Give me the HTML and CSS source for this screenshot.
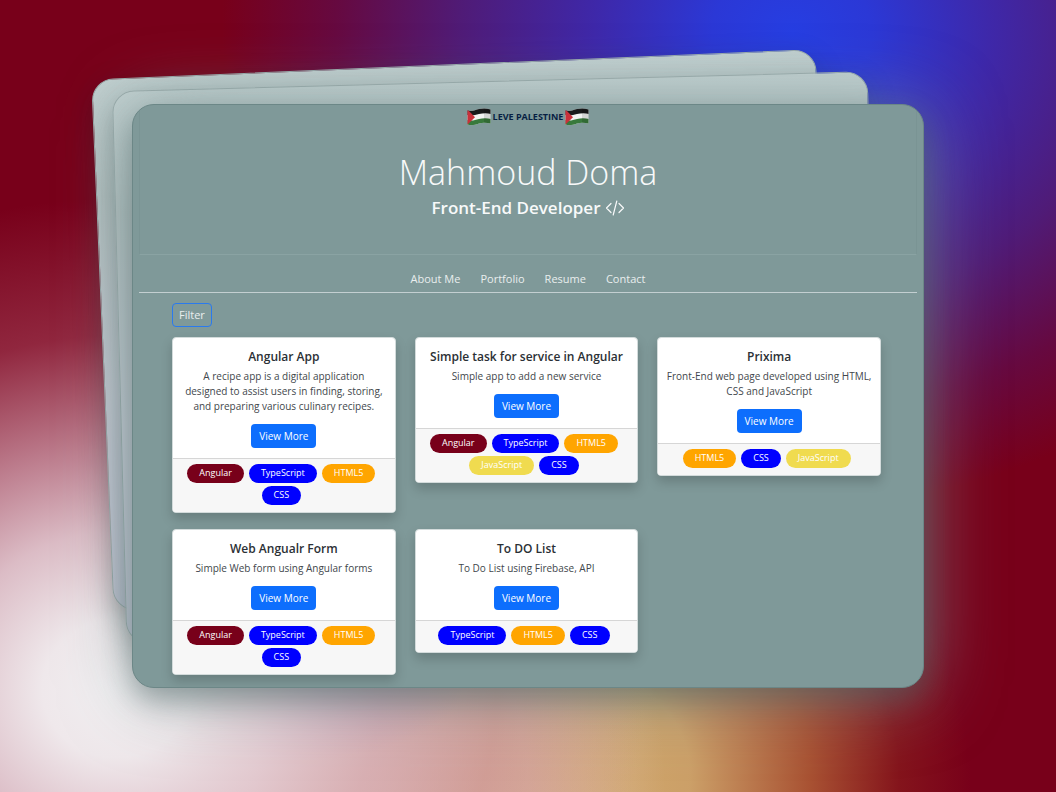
FILE: index.html
```
<!DOCTYPE html>
<html lang="en">
<head>
<meta charset="utf-8">
<meta name="viewport" content="width=device-width, initial-scale=1">
<title>Mahmoud Doma</title>
<link rel="stylesheet" href="styles.css">
</head>
<body>
<svg class="defs" width="0" height="0" aria-hidden="true">
  <symbol id="flag" viewBox="0 0 24 18">
    <clipPath id="wave"><path d="M0.5 2.2C5 4 8 1.8 12 1 16 0 20 0.4 23.5 1.4V15.6C20 14.6 16 14.4 12 15.4 8 16.6 5 18 0.5 16.6Z"/></clipPath>
    <g clip-path="url(#wave)">
      <rect width="24" height="18" fill="#f1f3f2"/>
      <path d="M0 0H24V6C20 4.8 16 5 12 6 8 7 5 8 0 7Z" fill="#18191a"/>
      <path d="M0 12C5 13.4 8 12 12 11 16 10 20 10 24 11V18H0Z" fill="#38793c"/>
      <path d="M0 1L8 9.2 0 17Z" fill="#c9303a"/>
      <path d="M17 0C19 1 22 1 24 1V18C22 16 19 15 17 15Z" fill="#000" opacity=".12"/>
    </g>
  </symbol>
</svg>
<main class="stage">
  <div class="sheet sheet-back"></div>
  <div class="sheet sheet-middle"></div>
  <div class="panel">
    <header class="hero">
      <p class="banner"><svg class="flag"><use href="#flag"/></svg><span class="banner-text">LEVE PALESTINE</span><svg class="flag"><use href="#flag"/></svg></p>
      <h1 class="name">Mahmoud Doma</h1>
      <p class="role">Front-End Developer
        <svg class="code" viewBox="0 0 20 16" fill="none" stroke="currentColor" stroke-width="1.2" stroke-linecap="round" stroke-linejoin="round" aria-hidden="true"><path d="M6 3.5L1.5 8l4.500 4.500M14 3.5l4.500 4.500-4.500 4.500M11.800 1L8.200 15"/></svg>
      </p>
    </header>
    <nav class="nav">
      <a class="nav-link" href="#about">About Me</a>
      <a class="nav-link" href="#portfolio">Portfolio</a>
      <a class="nav-link" href="#resume">Resume</a>
      <a class="nav-link" href="#contact">Contact</a>
    </nav>
    <section class="portfolio" id="portfolio">
      <button class="filter" type="button">Filter</button>
      <div class="cards">
        <article class="card">
          <div class="card-body">
            <h2 class="card-title">Angular App</h2>
            <p class="card-text">A recipe app is a digital application<br>designed to assist users in finding, storing, and preparing various culinary recipes.</p>
            <a class="more" href="#angular-app">View More</a>
          </div>
          <div class="card-footer"><span class="tag angular">Angular</span><span class="tag blue">TypeScript</span><span class="tag html">HTML5</span><span class="tag blue">CSS</span></div>
        </article>
        <article class="card">
          <div class="card-body">
            <h2 class="card-title">Simple task for service in Angular</h2>
            <p class="card-text">Simple app to add a new service</p>
            <a class="more" href="#service-task">View More</a>
          </div>
          <div class="card-footer"><span class="tag angular">Angular</span><span class="tag blue">TypeScript</span><span class="tag html">HTML5</span><span class="tag js">JavaScript</span><span class="tag blue">CSS</span></div>
        </article>
        <article class="card">
          <div class="card-body">
            <h2 class="card-title">Prixima</h2>
            <p class="card-text">Front-End web page developed using HTML, CSS and JavaScript</p>
            <a class="more" href="#prixima">View More</a>
          </div>
          <div class="card-footer"><span class="tag html">HTML5</span><span class="tag blue">CSS</span><span class="tag js">JavaScript</span></div>
        </article>
        <article class="card">
          <div class="card-body">
            <h2 class="card-title">Web Angualr Form</h2>
            <p class="card-text">Simple Web form using Angular forms</p>
            <a class="more" href="#web-form">View More</a>
          </div>
          <div class="card-footer"><span class="tag angular">Angular</span><span class="tag blue">TypeScript</span><span class="tag html">HTML5</span><span class="tag blue">CSS</span></div>
        </article>
        <article class="card">
          <div class="card-body">
            <h2 class="card-title">To DO List</h2>
            <p class="card-text">To Do List using Firebase, API</p>
            <a class="more" href="#todo">View More</a>
          </div>
          <div class="card-footer"><span class="tag blue">TypeScript</span><span class="tag html">HTML5</span><span class="tag blue">CSS</span></div>
        </article>
      </div>
    </section>
  </div>
</main>
</body>
</html>
```
FILE: styles.css
```
* { box-sizing: border-box; }

body {
  margin: 0;
  min-height: 100vh;
  font-family: "Open Sans", "Noto Sans", sans-serif;
  font-size: 10px;
  color: #212529;
  background:
    radial-gradient(ellipse 50% 62% at 11% 87%, #f2f0f2 0, #efe8eb 14%, rgba(228, 204, 212, 0.92) 32%, rgba(215, 172, 185, 0.7) 50%, rgba(190, 110, 130, 0.35) 72%, rgba(120, 0, 26, 0) 100%),
    radial-gradient(ellipse 16% 10% at 28% 86%, rgba(130, 125, 190, 0.8) 0, rgba(130, 125, 190, 0) 100%),
    radial-gradient(ellipse 26% 50% at 37% 100%, #dcbaa8 0, rgba(220, 184, 164, 0.9) 50%, rgba(220, 184, 164, 0) 100%),
    radial-gradient(ellipse 38% 46% at 54% 98%, #d2ab6c 0, rgba(208, 168, 108, 0.95) 30%, rgba(184, 108, 58, 0.75) 60%, rgba(150, 50, 30, 0.4) 82%, rgba(120, 0, 26, 0) 100%),
    radial-gradient(ellipse 54% 60% at 75% 4%, #263ee2 0, #2b38d6 14%, rgba(56, 44, 184, 0.9) 35%, rgba(66, 36, 150, 0.75) 58%, rgba(80, 20, 110, 0.45) 80%, rgba(120, 0, 26, 0) 100%),
    #78001a;
}

.defs { position: absolute; }

.stage {
  position: relative;
  width: 75%;
  margin: 0 auto;
  padding: 104px 0;
}

/* Tilted sheets stacked behind the main panel */
.sheet {
  position: absolute;
  border: 1px solid #9aabab;
  border-radius: 22px;
  background: linear-gradient(180deg, #c0cfcf 0, #b4c1c1 22%, #c6cbd4 60%, #c6c8d8 100%);
  box-shadow: 0 10px 28px rgba(20, 40, 40, 0.25);
}

.sheet-back {
  inset: 64px 97px 196px -30px;
  transform: rotate(-2.4deg);
}

.sheet-middle {
  inset: 81px 49px 158px -13px;
  transform: rotate(-1.5deg);
}

.panel {
  position: relative;
  overflow: hidden;
  padding: 0 6px 12px;
  border: 1px solid #6c8787;
  border-radius: 22px;
  background: #7f9999;
  box-shadow: 0 12px 28px rgba(60, 85, 85, 0.4), 4px 6px 72px rgba(127, 153, 153, 0.7);
}

.hero {
  height: 150px;
  border: solid;
  border-width: 0 1px 1px;
  border-color: transparent #7a9494 #8aa3a3;
  text-align: center;
  color: #f8f9fa;
}

.banner {
  display: flex;
  justify-content: center;
  align-items: center;
  gap: 2px;
  margin: 0;
  padding-top: 3px;
  color: #071f43;
  font-size: 9px;
  font-weight: 700;
  line-height: 18px;
}

.flag { width: 24px; height: 18px; }

.name {
  margin: 22px 0 0;
  font-size: 34px;
  font-weight: 300;
  line-height: 48px;
}

.role {
  display: flex;
  justify-content: center;
  align-items: center;
  gap: 4px;
  margin: 0;
  font-size: 17px;
  font-weight: 600;
  line-height: 24px;
}

.code { width: 20px; height: 16px; }

.nav {
  display: flex;
  justify-content: center;
  gap: 20px;
  padding: 16px 0 5px;
  border-bottom: 1px solid #c3cfd1;
}

.nav-link {
  color: #e9eeee;
  font-size: 11px;
  line-height: 16px;
  text-decoration: none;
}

.portfolio { padding: 10px 36px 0 33px; }

.filter {
  display: block;
  height: 24px;
  margin-bottom: 10px;
  padding: 0 6px;
  border: 1px solid #2a7aee;
  border-radius: 4px;
  background: transparent;
  color: #e9eeee;
  font: inherit;
  font-size: 11px;
  line-height: 20px;
}

.cards {
  display: grid;
  grid-template-columns: repeat(3, minmax(0, 1fr));
  align-items: start;
  gap: 16px 19px;
}

.card {
  overflow: hidden;
  border: 1px solid #d3dbdb;
  border-radius: 4px;
  background: #fff;
  box-shadow: 0 6px 12px rgba(0, 0, 0, 0.18);
  text-align: center;
}

.card-body { padding: 10px 6px; }

.card-title {
  margin: 0 0 4px;
  color: #2b3035;
  font-size: 12px;
  font-weight: 600;
  line-height: 17px;
}

.card-text {
  margin: 0 0 10px;
  color: #42474c;
  line-height: 15px;
}

.more {
  display: inline-block;
  padding: 0 8px;
  border-radius: 4px;
  background: #0d6efd;
  color: #fff;
  line-height: 24px;
  text-decoration: none;
  vertical-align: top;
}

.card-footer {
  display: flex;
  flex-wrap: wrap;
  justify-content: center;
  row-gap: 3px;
  padding: 5px 10px 7px;
  border-top: 1px solid #d6d6d6;
  background: #f7f7f7;
}

.tag {
  height: 19px;
  margin-right: 5px;
  padding: 0 12px;
  border-radius: 10px;
  color: #fff;
  font-size: 9px;
  line-height: 17px;
}

.angular { background: #78001a; }
.blue { background: #00f; }
.html { background: #ffa500; }
.js { background: #f0db4f; }
```
